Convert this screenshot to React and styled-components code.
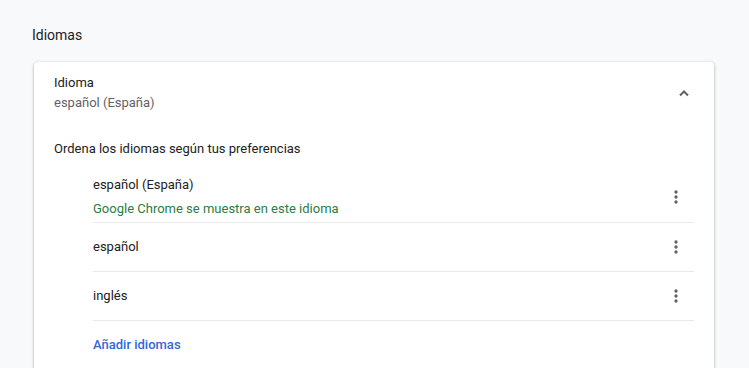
import React from "react";
import styled, { createGlobalStyle } from "styled-components";

const GlobalStyle = createGlobalStyle`
    body {
        margin: 0;
        background-color: #f8f9fa;
        font-family: Roboto, "Liberation Sans", sans-serif;
        font-size: 13px;
        color: #202124;
    }
`

const languages = [
    { name: "español (España)", note: "Google Chrome se muestra en este idioma" },
    { name: "español" },
    { name: "inglés" },
];

function MoreIcon() {
    return (
        <svg width="20" height="20" viewBox="0 0 24 24" fill="#5f6368">
            <circle cx="12" cy="6" r="2" />
            <circle cx="12" cy="12" r="2" />
            <circle cx="12" cy="18" r="2" />
        </svg>
    );
}

function ChevronUp() {
    return (
        <svg width="12" height="8" viewBox="0 0 12 8">
            <path d="M2 6.5 L6 2.5 L10 6.5" fill="none" stroke="#5f6368" strokeWidth="2" />
        </svg>
    );
}

export default function App() {
    return (
        <Page>
            <GlobalStyle />
            <Heading>Idiomas</Heading>
            <Card>
                <CardHeader>
                    <HeaderText>
                        <Label>Idioma</Label>
                        <Secondary>español (España)</Secondary>
                    </HeaderText>
                    <IconButton aria-label="Contraer">
                        <ChevronUp />
                    </IconButton>
                </CardHeader>
                <Hint>Ordena los idiomas según tus preferencias</Hint>
                <LangList>
                    {languages.map((lang) => (
                        <LangRow key={lang.name} $tall={!!lang.note}>
                            <LangText>
                                <Label>{lang.name}</Label>
                                {lang.note && <Note>{lang.note}</Note>}
                            </LangText>
                            <IconButton aria-label="Más acciones">
                                <MoreIcon />
                            </IconButton>
                        </LangRow>
                    ))}
                    <AddLink>Añadir idiomas</AddLink>
                </LangList>
            </Card>
        </Page>
    );
}

const Page = styled.div`
    padding: 25px 35px 0 34px;
`

const Heading = styled.h2`
    margin: 0 0 17px -2px;
    font-size: 14px;
    font-weight: 400;
    line-height: 20px;
    color: #202124;
`

const Card = styled.div`
    background-color: #fff;
    border-radius: 4px;
    box-shadow: 0 1px 2px 0 rgba(60, 64, 67, 0.3), 0 1px 3px 1px rgba(60, 64, 67, 0.15);
    padding-bottom: 20px;
`

const CardHeader = styled.div`
    display: flex;
    align-items: center;
    padding: 11px 12px 13px 20px;
`

const HeaderText = styled.div`
    flex: 1;
    display: flex;
    flex-direction: column;
`

const Label = styled.div`
    line-height: 20px;
    color: #202124;
`

const Secondary = styled.div`
    line-height: 20px;
    color: #5f6368;
`

const IconButton = styled.button`
    width: 36px;
    height: 36px;
    display: flex;
    align-items: center;
    justify-content: center;
    border: none;
    background: transparent;
    padding: 0;
    border-radius: 50%;
`

const Hint = styled.div`
    margin-top: 13px;
    padding: 0 20px;
    line-height: 20px;
`

const LangList = styled.div`
    margin-top: 12px;
    padding: 0 20px 0 59px;
`

const LangRow = styled.div`
    display: flex;
    align-items: center;
    min-height: ${(p) => (p.$tall ? "50px" : "48px")};
    padding-top: ${(p) => (p.$tall ? "1px" : "0")};
    border-bottom: 1px solid #e8eaed;
`

const LangText = styled.div`
    flex: 1;
    display: flex;
    flex-direction: column;
    gap: 4px;
`

const Note = styled.div`
    line-height: 20px;
    color: #2b7d42;
`

const AddLink = styled.div`
    display: flex;
    align-items: center;
    height: 46px;
    color: #3367d6;
    font-weight: 500;
`
